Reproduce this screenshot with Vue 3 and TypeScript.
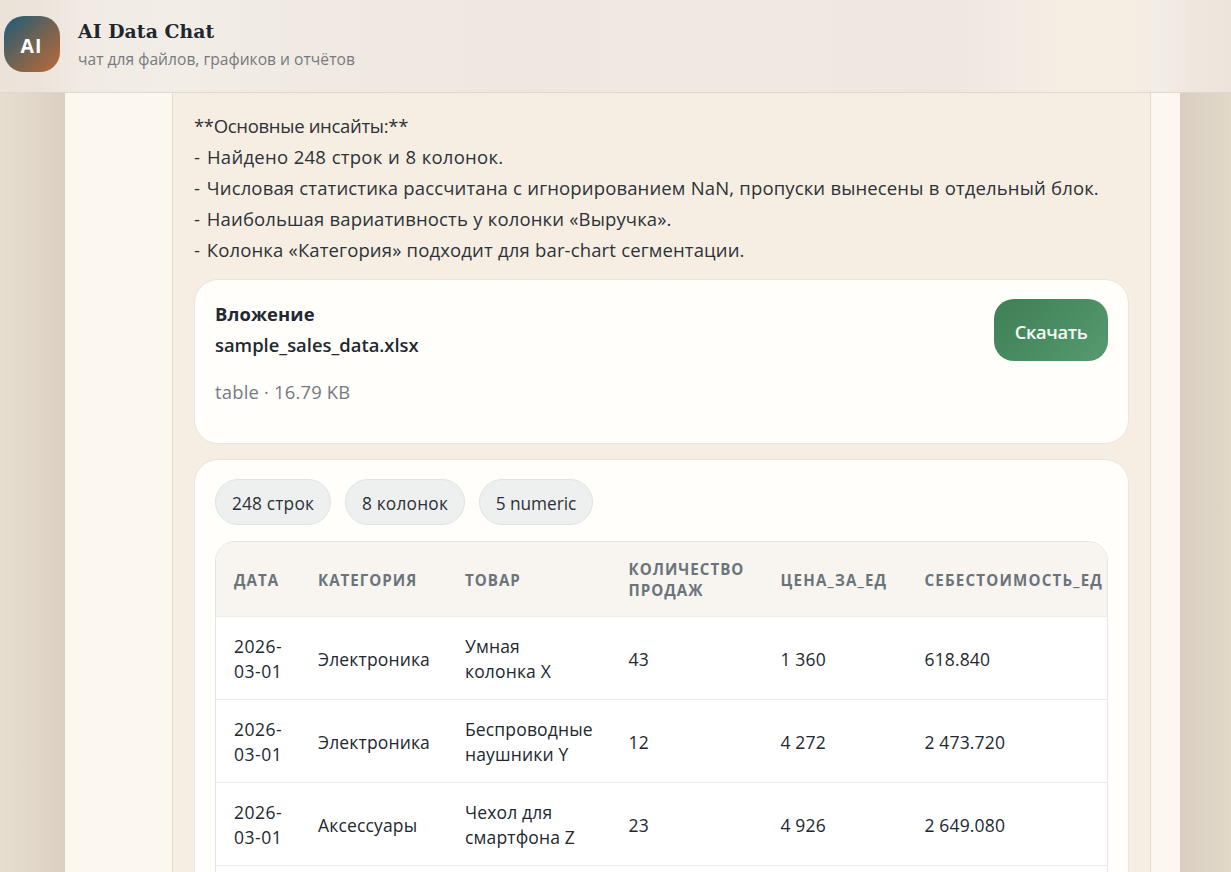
<script setup lang="ts">
interface InsightLine {
  text: string
  cls: string
  bullet?: boolean
}

const insights: InsightLine[] = [
  { text: '**Основные инсайты:**', cls: 'heading' },
  { text: 'Найдено 248 строк и 8 колонок.', cls: 'numbers', bullet: true },
  { text: 'Числовая статистика рассчитана с игнорированием NaN, пропуски вынесены в отдельный блок.', cls: 'plain', bullet: true },
  { text: 'Наибольшая вариативность у колонки «Выручка».', cls: 'plain', bullet: true },
  { text: 'Колонка «Категория» подходит для bar-chart сегментации.', cls: 'plain', bullet: true },
]

const chips: string[] = ['248 строк', '8 колонок', '5 numeric']

const columns: string[][] = [
  ['ДАТА'],
  ['КАТЕГОРИЯ'],
  ['ТОВАР'],
  ['КОЛИЧЕСТВО', 'ПРОДАЖ'],
  ['ЦЕНА_ЗА_ЕД'],
  ['СЕБЕСТОИМОСТЬ_ЕД'],
]

const rows: string[][][] = [
  [['2026-', '03-01'], ['Электроника'], ['Умная', 'колонка X'], ['43'], ['1 360'], ['618.840']],
  [['2026-', '03-01'], ['Электроника'], ['Беспроводные', 'наушники Y'], ['12'], ['4 272'], ['2 473.720']],
  [['2026-', '03-01'], ['Аксессуары'], ['Чехол для', 'смартфона Z'], ['23'], ['4 926'], ['2 649.080']],
]
</script>

<template>
  <div class="app">
    <header class="topbar">
      <div class="logo"><span>AI</span></div>
      <div class="brand">
        <div class="title">AI Data Chat</div>
        <div class="subtitle">чат для файлов, графиков и отчётов</div>
      </div>
    </header>
    <main class="stage">
      <section class="panel">
        <article class="bubble">
          <div class="insights">
            <div v-for="line in insights" :key="line.text" class="line" :class="line.cls"><span v-if="line.bullet" class="dash">- </span>{{ line.text }}</div>
          </div>
          <div class="card attachment">
            <div class="info">
              <div class="label">Вложение</div>
              <div class="file">sample_sales_data.xlsx</div>
              <div class="meta">table · 16.79 KB</div>
            </div>
            <button class="download" type="button">Скачать</button>
          </div>
          <div class="card preview">
            <div class="chips">
              <div v-for="(chip, i) in chips" :key="chip" class="chip" :class="'chip' + i">{{ chip }}</div>
            </div>
            <div class="table">
              <div class="row head">
                <div v-for="col in columns" :key="col[0]" class="cell">
                  <div v-for="part in col" :key="part">{{ part }}</div>
                </div>
              </div>
              <div v-for="(row, r) in rows" :key="r" class="row">
                <div v-for="(cell, c) in row" :key="c" class="cell">
                  <div v-for="part in cell" :key="part">{{ part }}</div>
                </div>
              </div>
            </div>
          </div>
        </article>
      </section>
    </main>
  </div>
</template>

<style>
html,
body {
  margin: 0;
  overflow: hidden;
}
</style>

<style scoped>
* {
  box-sizing: border-box;
}
.app {
  height: 872px;
  overflow: hidden;
  display: flex;
  flex-direction: column;
  font-family: 'Open Sans', 'Noto Sans', sans-serif;
  color: #222831;
  background: #e3d9ca;
  white-space: nowrap;
}
.topbar {
  flex: none;
  height: 93px;
  display: flex;
  align-items: flex-start;
  gap: 18px;
  padding: 16px 4px 0;
  border-bottom: 1px solid #dfd8d0;
  background: linear-gradient(90deg, #ebe2d8 0, #ece4db 40px, #f1ebe4 85px, #f3ede7 180px, #f0eae3 300px, #f0e9e3 420px, #efe8e2 500px, #f0e9e3 700px, #efe8e2 960px, #f3ebe4 1020px, #f6ede3 1060px, #f6ede3 1130px, #f3ede7 1160px, #efe7de 1195px, #ede5dd 1231px);
}
.logo {
  width: 56px;
  height: 56px;
  border-radius: 20px;
  background: linear-gradient(135deg, #1d5b78, #716353 50%, #bd6a36);
  display: grid;
  place-items: center;
  color: #fff;
  font-weight: 700;
  font-size: 19.5px;
  line-height: 26px;
  letter-spacing: 1px;
  padding: 4px 1px 0 0;
}
.title {
  font-family: 'DejaVu Serif', serif;
  font-weight: 700;
  font-size: 18.8px;
  line-height: 30px;
  letter-spacing: 0.1px;
  color: #20262e;
}
.subtitle {
  margin-top: 1px;
  font-size: 15.6px;
  line-height: 24px;
  letter-spacing: 0.02px;
  color: #757a80;
}
.stage {
  flex: 1;
  min-height: 0;
  padding: 0 51px 0 65px;
  background: linear-gradient(90deg, #e7decf 0, #e3d9ca 25px, #dacfc1 65px, #d8cdbe 1180px, #ddd3c4 1200px, #e1d8c8 1231px);
}
.panel {
  height: 100%;
  padding: 0 29px 0 107px;
  background: #fcf8f0;
}
.bubble {
  height: 100%;
  overflow: hidden;
  padding: 17px 21px 0;
  border: solid #e5dacd;
  border-width: 0 1px;
  background: #f6eee3;
}
.line {
  height: 31px;
  line-height: 31px;
  font-size: 18.5px;
  color: #2d3238;
}
.dash {
  letter-spacing: 0.9px;
}
.heading {
  letter-spacing: -0.32px;
}
.numbers {
  letter-spacing: 0.25px;
  word-spacing: 0.4px;
}
.plain {
  letter-spacing: 0.13px;
  word-spacing: 0.25px;
}
.card {
  border: 1px solid #e9e5de;
  border-radius: 24px;
  background: #fffefa;
}
.attachment {
  height: 165px;
  margin-top: 14px;
  padding: 19px 20px;
  display: flex;
  justify-content: space-between;
  align-items: flex-start;
  line-height: 31px;
  font-size: 18.4px;
}
.info {
  margin-top: -1px;
}
.label {
  font-weight: 700;
  letter-spacing: 0.1px;
}
.file {
  font-weight: 600;
}
.meta {
  margin-top: 16px;
  letter-spacing: 0.2px;
  color: #757a82;
}
.download {
  width: 114px;
  height: 62px;
  padding: 3px 0 0;
  border: 0;
  border-radius: 20px;
  background: linear-gradient(135deg, #3e7f56, #579a6f);
  color: #f6fcf7;
  font: 600 18.3px/26px 'Open Sans', 'Noto Sans', sans-serif;
  letter-spacing: -0.35px;
}
.preview {
  height: 600px;
  margin-top: 15px;
  padding: 19px 20px;
}
.chips {
  display: flex;
  gap: 14px;
}
.chip {
  height: 46px;
  border: 1px solid #dfe3e3;
  border-radius: 23px;
  background: #eef0f0;
  font-size: 17.3px;
  line-height: 47px;
  text-align: center;
  color: #2b3138;
}
.chip0 {
  width: 116px;
  letter-spacing: 0.2px;
}
.chip1 {
  width: 120px;
  letter-spacing: 0.22px;
}
.chip2 {
  width: 114px;
  letter-spacing: -0.08px;
}
.table {
  height: 500px;
  margin-top: 16px;
  overflow: hidden;
  border: 1px solid #e5e5e5;
  border-radius: 20px;
  background: #fff;
}
.row {
  display: grid;
  grid-template-columns: 84px 147px 163.5px 152px 144px 214px;
  align-items: center;
  height: 83px;
  border-bottom: 1px solid #ececec;
  font-size: 17.5px;
  line-height: 25px;
  letter-spacing: 0.15px;
}
.cell {
  padding: 2px 0 0 18px;
}
.row:not(.head) .cell:first-child {
  letter-spacing: 0.5px;
}
.row.head {
  height: 75px;
  background: #f8f5f1;
  color: #6b737b;
  font-size: 15.1px;
  font-weight: 700;
  line-height: 21px;
  letter-spacing: 1px;
}
.row.head .cell:nth-child(n + 5) {
  letter-spacing: 1.2px;
}
</style>
